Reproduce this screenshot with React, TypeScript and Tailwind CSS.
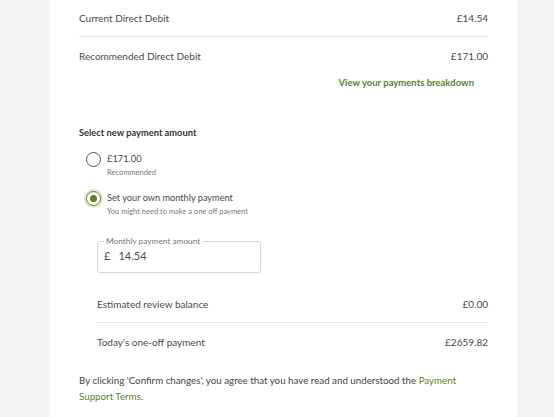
export default function App() {
  return (
    <div className="min-h-[417px] bg-[#f5f5f5] font-['Lato',sans-serif] text-[#4a4a4a]">
      <div className="ml-[50px] w-[467px] min-h-[417px] bg-white pl-[29px] pr-[29px]">
        <div className="flex h-[37px] items-center justify-between border-b border-[#e6e6e6] text-[10px]">
          <span>Current Direct Debit</span>
          <span>£14.54</span>
        </div>
        <div className="flex h-[38px] items-center justify-between text-[10px]">
          <span>Recommended Direct Debit</span>
          <span>£171.00</span>
        </div>
        <div className="mt-[1px] flex justify-end pr-[14px] text-[9.5px] font-bold leading-[14px] text-[#5b7f2b]">
          View your payments breakdown
        </div>

        <p className="mt-[36px] text-[9.3px] font-bold leading-[14px] text-[#333]">Select new payment amount</p>

        <div className="mt-[11px] flex flex-col gap-[11px] pl-[7px]">
          <label className="flex items-start gap-[6px]">
            <span className="mt-[0.5px] flex h-[15px] w-[15px] items-center justify-center rounded-full border-[1.5px] border-[#555]" />
            <span className="flex flex-col">
              <span className="text-[9.3px] leading-[16px]">£171.00</span>
              <span className="text-[7.5px] leading-[12px] text-[#777]">Recommended</span>
            </span>
          </label>
          <label className="flex items-start gap-[6px]">
            <span className="mt-[0.5px] flex h-[15px] w-[15px] items-center justify-center rounded-full border-[1.5px] border-[#5b7f2b] ring-2 ring-[#dde7cc]">
              <span className="h-[7px] w-[7px] rounded-full bg-[#5b7f2b]" />
            </span>
            <span className="flex flex-col">
              <span className="text-[9.2px] leading-[16px]">Set your own monthly payment</span>
              <span className="text-[7.5px] leading-[12px] text-[#777]">You might need to make a one off payment</span>
            </span>
          </label>
        </div>

        <div className="pl-[18px]">
          <fieldset className="mt-[18px] h-[37px] w-[164px] rounded-[3px] border border-[#d6d6d6] px-[6px]">
            <legend className="px-[2px] text-[8.3px] leading-[10px] text-[#777]">Monthly payment amount</legend>
            <div className="flex items-center gap-[8px] pt-[2px] text-[11px]">
              <span>£</span>
              <span>14.54</span>
            </div>
          </fieldset>

          <div className="mt-[13px] flex h-[37px] items-center justify-between border-b border-[#e6e6e6] text-[10px]">
            <span>Estimated review balance</span>
            <span>£0.00</span>
          </div>
          <div className="flex h-[38px] items-center justify-between text-[10px]">
            <span>Today's one-off payment</span>
            <span>£2659.82</span>
          </div>
        </div>

        <div className="mt-[11px] pr-[20px] text-[9.75px] leading-[16px] text-[#444]">
          <div>
            By clicking 'Confirm changes', you agree that you have read and understood the{' '}
            <a className="text-[#5b7f2b]">Payment</a>
          </div>
          <div>
            <a className="text-[#5b7f2b]">Support Terms</a>.
          </div>
        </div>
      </div>
    </div>
  );
}
